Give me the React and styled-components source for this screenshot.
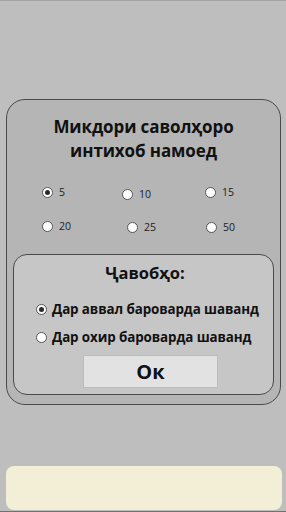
import React, { useState } from "react";
import styled, { createGlobalStyle } from "styled-components";

const Global = createGlobalStyle`
  html, body { margin: 0; padding: 0; background: #bebebe; }
  * { box-sizing: border-box; }
`;

const Page = styled.div`
  width: 286px;
  height: 512px;
  background: #bebebe;
  border-top: 1px solid #a4a4a4;
  border-bottom: 1px solid #3b7cc2;
  display: flex;
  flex-direction: column;
  font-family: "Open Sans", "Noto Sans", sans-serif;
  color: #111;
`;

const Outer = styled.div`
  margin: 98px 5px 0 6px;
  height: 306px;
  border: 1px solid #4a4a4a;
  border-radius: 19px;
  background: #b5b5b5;
  display: flex;
  flex-direction: column;
`;

const Title = styled.h1`
  margin: 15px 0 0;
  font-size: 17px;
  line-height: 24px;
  font-weight: 700;
  text-align: center;
  letter-spacing: -0.1px;
`;

const CountGrid = styled.div`
  margin-top: 12px;
  padding-left: 35px;
  display: grid;
  grid-template-columns: 80px 83px auto;
  grid-auto-rows: 34px;
  align-items: center;
`;

const Circle = styled.span`
  width: ${(p) => p.$size}px;
  height: ${(p) => p.$size}px;
  border-radius: 50%;
  background: #fff;
  border: 1px solid #555;
  display: inline-flex;
  align-items: center;
  justify-content: center;
  flex-shrink: 0;
  &::after {
    content: "";
    width: ${(p) => p.$size - 6}px;
    height: ${(p) => p.$size - 6}px;
    border-radius: 50%;
    background: ${(p) => (p.$on ? "#2a2a2a" : "transparent")};
  }
`;

const CountItem = styled.label`
  display: flex;
  align-items: center;
  gap: 6px;
  font-size: 10.5px;
  color: #222;
  cursor: pointer;
  transform: translate(${(p) => p.$dx || 0}px, ${(p) => p.$dy || 0}px);
`;

const Inner = styled.div`
  margin: auto 6px 9px 6px;
  height: 141px;
  border: 1px solid #4a4a4a;
  border-radius: 14px;
  background: #c6c6c6;
  display: flex;
  flex-direction: column;
`;

const Sub = styled.h2`
  margin: 7px 0 0;
  font-size: 16.5px;
  line-height: 22px;
  font-weight: 700;
  text-align: center;
  padding-left: 3px;
`;

const Options = styled.div`
  margin-top: 15px;
  padding-left: 22px;
  display: flex;
  flex-direction: column;
  gap: 8px;
`;

const Option = styled.label`
  display: flex;
  align-items: center;
  gap: 5px;
  height: 20px;
  font-size: 13.4px;
  font-weight: 700;
  letter-spacing: -0.1px;
  cursor: pointer;
`;

const OkButton = styled.button`
  margin: 8px 0 0 69px;
  width: 135px;
  height: 33px;
  background: #e2e2e2;
  border: 1px solid #bcbcbc;
  font-family: inherit;
  font-size: 20px;
  font-weight: 700;
  color: #111;
  padding: 0;
  line-height: 1;
`;

const Footer = styled.div`
  margin: auto 4px 1px 6px;
  height: 44px;
  border-radius: 8px;
  background: #f3efd6;
`;

const counts = [
  { v: 5 },
  { v: 10, dy: 2 },
  { v: 15 },
  { v: 20 },
  { v: 25, dx: 5, dy: 1 },
  { v: 50, dx: 1, dy: 1 },
];

const answers = ["Дар аввал баровардa шаванд", "Дар охир баровардa шаванд"].map(
  (t) => t.replace("a", "а")
);

export default function App() {
  const [count, setCount] = useState(5);
  const [order, setOrder] = useState(0);
  return (
    <>
      <Global />
      <Page>
        <Outer>
          <Title>
            Микдори саволҳоро
            <br />
            интихоб намоед
          </Title>
          <CountGrid>
            {counts.map((c) => (
              <CountItem
                key={c.v}
                $dx={c.dx}
                $dy={c.dy}
                onClick={() => setCount(c.v)}
              >
                <Circle $size={11} $on={count === c.v} />
                {c.v}
              </CountItem>
            ))}
          </CountGrid>
          <Inner>
            <Sub>Ҷавобҳо:</Sub>
            <Options>
              {answers.map((t, i) => (
                <Option key={i} onClick={() => setOrder(i)}>
                  <Circle $size={11} $on={order === i} />
                  {t}
                </Option>
              ))}
            </Options>
            <OkButton>Ок</OkButton>
          </Inner>
        </Outer>
        <Footer />
      </Page>
    </>
  );
}
